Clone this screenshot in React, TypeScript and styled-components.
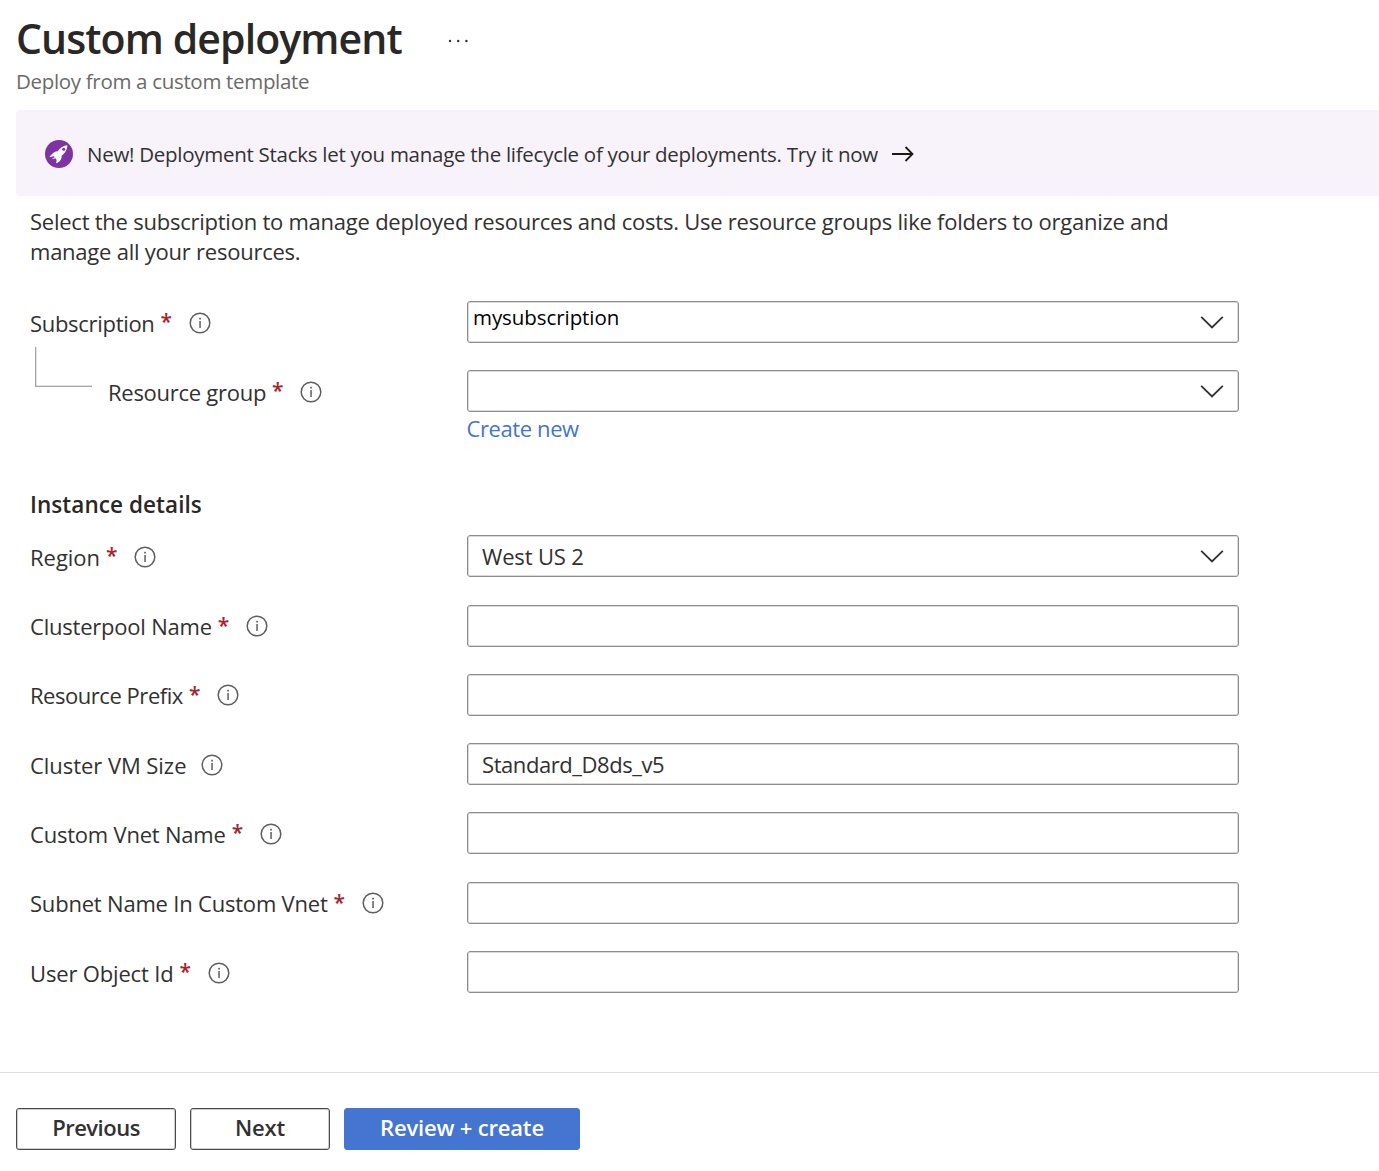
import React from "react";
import styled, { createGlobalStyle, css } from "styled-components";

const GlobalStyle = createGlobalStyle`
  *, *::before, *::after { box-sizing: border-box; }
  body {
    margin: 0;
    background: #ffffff;
    color: #323130;
    font-family: "Open Sans", "Noto Sans", sans-serif;
  }
`;

const Page = styled.div`
  display: flex;
  flex-direction: column;
  height: 1171px;
  overflow: hidden;
`;

const Header = styled.header`
  padding: 8px 0 0 16px;
`;

const TitleRow = styled.div`
  display: flex;
  align-items: center;
  gap: 46px;
  height: 60px;
`;

const Title = styled.h1`
  margin: 0;
  color: #292827;
  font-size: 41px;
  font-weight: 600;
  line-height: 60px;
  letter-spacing: -0.9px;
  white-space: nowrap;
`;

const MoreButton = styled.button`
  display: flex;
  padding: 5px 0 0;
  border: 0;
  background: none;
`;

const Subtitle = styled.p`
  margin: -2px 0 0;
  color: #6b6a68;
  font-size: 20.5px;
  line-height: 30px;
  letter-spacing: -0.32px;
`;

const Banner = styled.section`
  display: flex;
  align-items: center;
  flex: none;
  height: 86px;
  margin: 14px 0 0 16px;
  padding: 1px 0 0 29px;
  border-radius: 4px 0 0 4px;
  background: #f8f3fb;
`;

const BannerText = styled.span`
  margin: 1px 13.5px 0 14px;
  font-size: 20.5px;
  line-height: 30px;
  letter-spacing: -0.274px;
  white-space: nowrap;
`;

const Form = styled.main`
  display: flex;
  flex-direction: column;
  flex: 1;
  padding: 10px 0 0 30px;
`;

const Description = styled.p`
  margin: 0 0 35px;
  font-size: 22px;
  line-height: 30px;
  letter-spacing: -0.238px;
  white-space: nowrap;
`;

const FieldList = styled.div`
  display: flex;
  flex-direction: column;
  gap: 27.3px;
`;

const FieldRow = styled.div`
  display: grid;
  grid-template-columns: 437px 772px;
  align-items: start;
`;

const LabelCell = styled.div`
  display: flex;
  align-items: center;
  height: 42px;
  padding-top: 1px;
`;

const Label = styled.label<{ $tracking: number }>`
  font-size: 22px;
  line-height: 30px;
  letter-spacing: ${(p) => p.$tracking}px;
  white-space: nowrap;
`;

const Required = styled.span`
  margin: 0 0 3px 6px;
  color: #a4262c;
  font-size: 21px;
  font-weight: 600;
  line-height: 30px;
`;

const InfoSlot = styled.span<{ $optional?: boolean }>`
  display: flex;
  margin-left: ${(p) => (p.$optional ? 14.5 : 16.5)}px;
`;

const Connector = styled.span`
  flex: none;
  align-self: flex-start;
  width: 57px;
  height: 40px;
  margin: -24px 16px 0 5px;
  border: solid #a6a4a2;
  border-width: 0 0 1px 1px;
  box-shadow: inset 0.5px -0.5px 0 rgba(166, 164, 162, 0.6);
`;

const Box = styled.div`
  display: flex;
  align-items: center;
  justify-content: space-between;
  height: 42px;
  padding: 0 14px;
  border: 1px solid #8f8d8b;
  border-radius: 3px;
  background: #ffffff;
  box-shadow: inset 0 0 0 1px rgba(138, 136, 134, 0.3);
`;

const Value = styled.span<{ $tracking?: number; $compact?: boolean }>`
  font-size: 22px;
  line-height: 30px;
  letter-spacing: ${(p) => p.$tracking ?? 0}px;
  ${(p) =>
    p.$compact &&
    css`
      margin: 0 0 11px -9px;
      color: #000000;
      font-size: 20.5px;
    `}
`;

const ChevronSlot = styled.span`
  display: flex;
  margin-left: auto;
`;

const CreateLink = styled.a`
  display: block;
  margin: 1px 0 -31px -0.5px;
  color: #4374ce;
  font-size: 22px;
  line-height: 30px;
  letter-spacing: -0.4px;
`;

const SectionTitle = styled.h2`
  margin: 77.5px 0 15.5px;
  color: #292827;
  font-size: 22.5px;
  font-weight: 600;
  line-height: 30px;
  letter-spacing: 0.07px;
`;

const Footer = styled.footer`
  display: flex;
  gap: 14px;
  flex: none;
  height: 99px;
  padding: 35px 0 0 16px;
  border-top: 1px solid #dfdedd;
`;

const FooterButton = styled.button<{ $width: number; $tracking: number; $primary?: boolean }>`
  width: ${(p) => p.$width}px;
  height: 42px;
  padding: 0 0 4px;
  border: 1px solid #4a4948;
  border-radius: 3px;
  background: #ffffff;
  box-shadow: inset 0 0 0 1px rgba(60, 59, 58, 0.25);
  color: #323130;
  font-family: inherit;
  font-size: 22px;
  font-weight: 600;
  line-height: 30px;
  letter-spacing: ${(p) => p.$tracking}px;
  ${(p) =>
    p.$primary &&
    css`
      border-color: #4475d0;
      background: #4475d0;
      box-shadow: none;
      color: #ffffff;
    `}
`;

const RocketIcon = () => (
  <svg width="28" height="28" viewBox="0 0 84 84">
    <circle cx="42" cy="42" r="42" fill="#7d33a3" />
    <path
      d="M67 16C56 17 46 23 38 34C30 33 20 42 13 52L26 49L30 51L19 58L32 55L35 61L33 70C40 68 51 60 50 47C60 40 67 29 67 16Z"
      fill="#ffffff"
    />
    <circle cx="56" cy="28" r="4.5" fill="#7d33a3" />
  </svg>
);

const ArrowIcon = () => (
  <svg width="23" height="18" viewBox="0 0 23 18" fill="none" stroke="#1b1a19" strokeWidth="1.8">
    <path d="M1 9H21.5M14.5 2L21.5 9L14.5 16" />
  </svg>
);

const InfoIcon = () => (
  <svg width="22" height="22" viewBox="0 0 22 22">
    <circle cx="11" cy="11" r="9.8" fill="none" stroke="#605e5c" strokeWidth="1.5" />
    <rect x="10.3" y="9" width="1.5" height="7" fill="#605e5c" />
    <rect x="10.2" y="5.8" width="1.7" height="1.7" fill="#605e5c" />
  </svg>
);

const ChevronIcon = () => (
  <svg width="24" height="14" viewBox="0 0 24 14" fill="none" stroke="#323130" strokeWidth="1.8">
    <path d="M1.2 1.8L12 12.5L22.8 1.8" />
  </svg>
);

const MoreIcon = () => (
  <svg width="20" height="4" viewBox="0 0 20 4" fill="#323130">
    <circle cx="2" cy="2" r="1.2" />
    <circle cx="10.2" cy="2" r="1.2" />
    <circle cx="18.4" cy="2" r="1.2" />
  </svg>
);

type FieldProps = {
  label: string;
  tracking: number;
  optional?: boolean;
  nested?: boolean;
  dropdown?: boolean;
  value?: string;
  valueTracking?: number;
  compact?: boolean;
  link?: string;
};

const Field = ({ label, tracking, optional, nested, dropdown, value, valueTracking, compact, link }: FieldProps) => (
  <FieldRow>
    <LabelCell>
      {nested && <Connector />}
      <Label $tracking={tracking}>{label}</Label>
      {!optional && <Required>*</Required>}
      <InfoSlot $optional={optional}>
        <InfoIcon />
      </InfoSlot>
    </LabelCell>
    <div>
      <Box>
        {value && (
          <Value $tracking={valueTracking} $compact={compact}>
            {value}
          </Value>
        )}
        {dropdown && (
          <ChevronSlot>
            <ChevronIcon />
          </ChevronSlot>
        )}
      </Box>
      {link && <CreateLink>{link}</CreateLink>}
    </div>
  </FieldRow>
);

const projectFields: FieldProps[] = [
  { label: "Subscription", tracking: -0.3, dropdown: true, value: "mysubscription", valueTracking: -0.07, compact: true },
  { label: "Resource group", tracking: -0.27, nested: true, dropdown: true, link: "Create new" },
];

const instanceFields: FieldProps[] = [
  { label: "Region", tracking: -0.02, dropdown: true, value: "West US 2", valueTracking: -0.15 },
  { label: "Clusterpool Name", tracking: -0.22 },
  { label: "Resource Prefix", tracking: -0.46 },
  { label: "Cluster VM Size", tracking: -0.05, optional: true, value: "Standard_D8ds_v5", valueTracking: -0.43 },
  { label: "Custom Vnet Name", tracking: -0.21 },
  { label: "Subnet Name In Custom Vnet", tracking: -0.2 },
  { label: "User Object Id", tracking: -0.16 },
];

export default function App() {
  return (
    <Page>
      <GlobalStyle />
      <Header>
        <TitleRow>
          <Title>Custom deployment</Title>
          <MoreButton aria-label="More">
            <MoreIcon />
          </MoreButton>
        </TitleRow>
        <Subtitle>Deploy from a custom template</Subtitle>
      </Header>
      <Banner>
        <RocketIcon />
        <BannerText>
          New! Deployment Stacks let you manage the lifecycle of your deployments. Try it now
        </BannerText>
        <ArrowIcon />
      </Banner>
      <Form>
        <Description>
          Select the subscription to manage deployed resources and costs. Use resource groups like folders to organize and
          <br />
          manage all your resources.
        </Description>
        <FieldList>
          {projectFields.map((f) => (
            <Field key={f.label} {...f} />
          ))}
        </FieldList>
        <SectionTitle>Instance details</SectionTitle>
        <FieldList>
          {instanceFields.map((f) => (
            <Field key={f.label} {...f} />
          ))}
        </FieldList>
      </Form>
      <Footer>
        <FooterButton $width={160} $tracking={-0.5}>
          Previous
        </FooterButton>
        <FooterButton $width={140} $tracking={-0.2}>
          Next
        </FooterButton>
        <FooterButton $width={236} $tracking={-0.18} $primary>
          Review + create
        </FooterButton>
      </Footer>
    </Page>
  );
}
